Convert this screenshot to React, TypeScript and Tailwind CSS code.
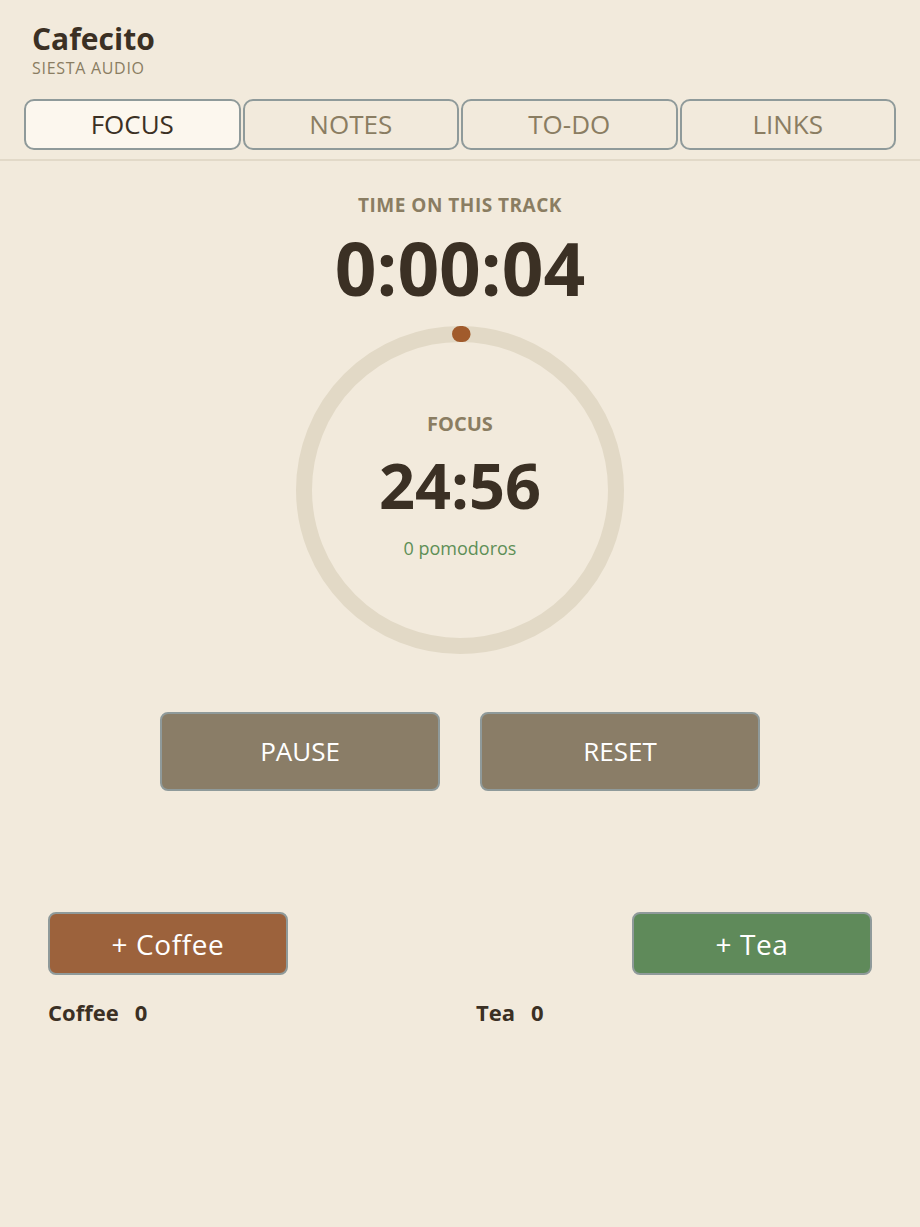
import React from "react";

const FONT = { fontFamily: '"Open Sans", "DejaVu Sans", sans-serif' };

const tabs = ["FOCUS", "NOTES", "TO-DO", "LINKS"];

function Ring() {
  const size = 328;
  const r = 156;
  const c = 2 * Math.PI * r;
  const progress = 4 / 1500;
  return (
    <svg width={size} height={size} viewBox={`0 0 ${size} ${size}`} className="absolute inset-0">
      <circle cx={164} cy={164} r={r} fill="none" stroke="#e2d9c6" strokeWidth={16} />
      <circle
        cx={164}
        cy={164}
        r={r}
        fill="none"
        stroke="#a15b2c"
        strokeWidth={16}
        strokeLinecap="round"
        strokeDasharray={`${c * progress} ${c}`}
        transform="rotate(-90 164 164)"
      />
    </svg>
  );
}

export default function App() {
  return (
    <div className="min-h-[1227px] w-full bg-[#f2eadc] text-[#3b3024]" style={FONT}>
      {/* header */}
      <header className="px-8 pt-[21px]">
        <h1 className="text-[30px] font-bold leading-[36px] text-[#3b3024]">Cafecito</h1>
        <p className="mt-px text-[16px] leading-[20px] tracking-[0.7px] text-[#8a7d62]">SIESTA AUDIO</p>
      </header>

      {/* tabs */}
      <nav className="mt-[21px] grid grid-cols-4 gap-[2px] border-b-2 border-[#e2d9c8] px-6 pb-[9px]">
        {tabs.map((t, i) => (
          <button
            key={t}
            className={
              i === 0
                ? "flex h-[51px] items-center justify-center rounded-[10px] border-2 border-[#8f9a9a] bg-[#fcf7ee] text-[26px] text-[#3b3024]"
                : "flex h-[51px] items-center justify-center rounded-[10px] border-2 border-[#8f9a9a] bg-transparent text-[26px] text-[#8a7d62]"
            }
          >
            {t}
          </button>
        ))}
      </nav>

      {/* track timer */}
      <section className="flex flex-col items-center pt-8">
        <div className="text-[19px] font-bold leading-[24px] tracking-[0.5px] text-[#8a7d62]">TIME ON THIS TRACK</div>
        <div className="mt-[14px] text-[73px] font-bold leading-[73px] text-[#3b3024]">0:00:04</div>

        <div className="relative mt-[22px] h-[328px] w-[328px]">
          <Ring />
          <div className="absolute inset-0 flex flex-col items-center pt-[86px]">
            <div className="text-[20px] font-bold leading-[24px] text-[#8a7d62]">FOCUS</div>
            <div className="mt-[17px] text-[63px] font-bold leading-[63px] text-[#3b3024]">24:56</div>
            <div className="mt-[20px] text-[18px] leading-[24px] text-[#5e8f56]">0 pomodoros</div>
          </div>
        </div>

        <div className="mt-[58px] flex gap-10">
          <button className="flex h-[79px] w-[280px] items-center justify-center rounded-[8px] border-2 border-[#8f9a9a] bg-[#8a7d67] text-[26px] font-medium text-white">
            PAUSE
          </button>
          <button className="flex h-[79px] w-[280px] items-center justify-center rounded-[8px] border-2 border-[#8f9a9a] bg-[#8a7d67] text-[26px] font-medium text-white">
            RESET
          </button>
        </div>
      </section>

      {/* drink counters */}
      <section className="mt-[121px] grid grid-cols-2 gap-x-8 px-12">
        <div className="flex">
          <button className="flex h-[63px] w-[240px] items-center justify-center rounded-[8px] border-2 border-[#8f9a9a] bg-[#9c623c] text-[28px] tracking-[0.6px] text-white">
            + Coffee
          </button>
        </div>
        <div className="flex justify-end">
          <button className="flex h-[63px] w-[240px] items-center justify-center rounded-[8px] border-2 border-[#8f9a9a] bg-[#5f8a5a] text-[28px] tracking-[0.6px] text-white">
            + Tea
          </button>
        </div>
        <div className="mt-[23px] flex gap-[16px] text-[22px] font-bold leading-[28px] text-[#3b3024]">
          <span>Coffee</span>
          <span>0</span>
        </div>
        <div className="mt-[23px] flex gap-[16px] text-[22px] font-bold leading-[28px] text-[#3b3024]">
          <span>Tea</span>
          <span>0</span>
        </div>
      </section>
    </div>
  );
}
